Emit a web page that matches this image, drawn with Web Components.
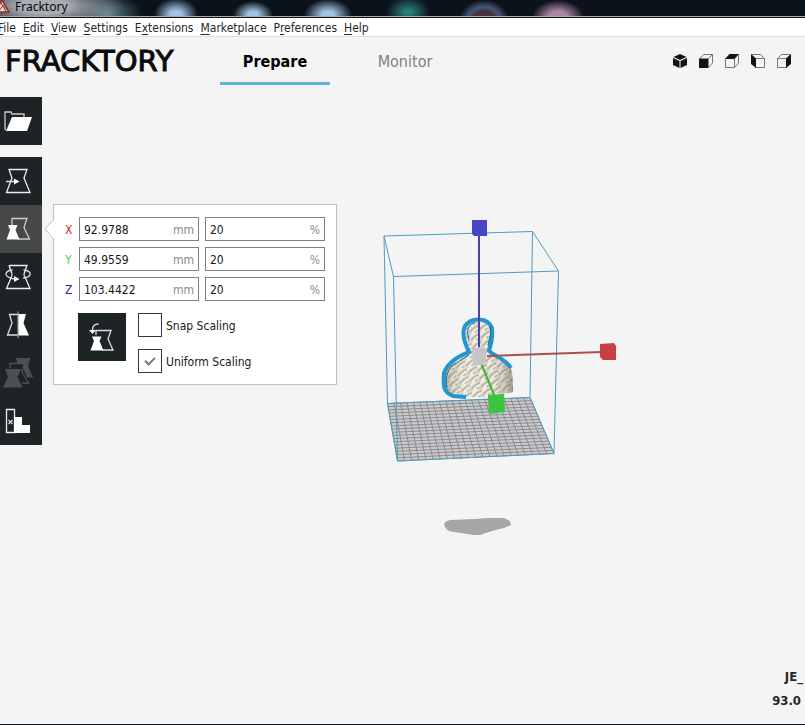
<!DOCTYPE html>
<html lang="en">
<head>
<meta charset="utf-8">
<title>Fracktory</title>
<style>
html, body { margin: 0; }
body { background: #f4f4f4; color: #16191c; font: 12px/18px "DejaVu Sans Condensed", "DejaVu Sans", sans-serif; font-stretch: condensed; overflow: hidden; }
</style>
</head>
<body>
<frack-app></frack-app>
<script>
function define(name, html, setup) {
  const template = document.createElement('template');
  template.innerHTML = html;
  customElements.define(name, class extends HTMLElement {
    connectedCallback() {
      if (this.shadowRoot) return;
      const root = this.attachShadow({ mode: 'open' });
      root.append(template.content.cloneNode(true));
      if (setup) setup(this, root);
    }
  });
}

const glass = 'M9 12.5H27L24 21L30 35.5H6.5L12 21Z';
const toolIcons = {
  open: '<path d="M6 33L5 32V15H11L12 17H24V20" fill="none" stroke="#ccc" stroke-width="1.3"/><path d="M12 20H32L27 34H6Z" fill="#fff"/>',
  move: `<path d="${glass}" fill="none" stroke="#eee" stroke-width="1.3"/><path d="M6 24.5H14" stroke="#ddd" stroke-width="1.5"/><path d="M14 21.5L19.5 24.5L14 27.5Z" fill="#fff"/>`,
  scale: '<path d="M12 20V13.500H27L24 22.500L29.500 34H18" fill="none" stroke="#ccc" stroke-width="1.3"/><path d="M8 20H17.500L15.500 25L19.500 34.500H6.500L10 25Z" fill="#fff"/>',
  rotate: '<path d="M9 12.500H27L24.500 19.500M11.500 19.500L9 12.500M11 25L6.500 35.500H30L25.500 25" fill="none" stroke="#eee" stroke-width="1.3"/><path d="M12.500 17C3 18 4 24.500 15 26M23.500 17C33 18 32 24.500 23 25M11.500 19L12 22L11 25M24.500 19L24 22L25.500 25" fill="none" stroke="#ddd" stroke-width="1.3"/><path d="M14 23L19.500 26L14 29Z" fill="#fff"/>',
  mirror: '<path d="M18 13.500H9.500L12 22L7.500 34H18" fill="none" stroke="#ddd" stroke-width="1.3"/><path d="M18 13H26L23.500 22L29 34.500H18Z" fill="#fff"/><path d="M18 10.500V37" stroke="#999" stroke-width="1.3"/>',
  models: '<g fill="#4d5052"><path d="M16 9H30.500L28 17L33 28.500H27L23 19V14H17Z"/><path d="M5 20H21L17.500 28L22.500 38.500H3L8 28Z"/></g><path d="M10 19V14.500H24.500L22 23L28.500 34H22" fill="none" stroke="#4d5052" stroke-width="1.3"/>',
  blocker: '<path d="M6.500 12.500H14.500V35.500H6.500Z" fill="none" stroke="#eee" stroke-width="1.3"/><path d="M14 20H22V28H30V36H14Z" fill="#fff"/><path d="M8.500 23L12.500 27M12.500 23L8.500 27" stroke="#ddd" stroke-width="1.3"/>'
};

define('window-title', `<style>
:host { display: flex; align-items: center; height: 17px; box-sizing: border-box; border-bottom: 1px solid #a4a8ad; padding-bottom: 2px; color: #08090a;
  background:
   radial-gradient(ellipse 80px 26px at 44px 6px, #a9adb4 30%, transparent),
   radial-gradient(ellipse 34px 20px at 108px 14px, #5f7f8c, transparent),
   radial-gradient(ellipse 22px 17px at 176px 15px, #a0c4e4 25%, transparent),
   radial-gradient(ellipse 20px 14px at 253px 15px, #a0c4e4 25%, transparent),
   radial-gradient(ellipse 24px 16px at 328px 15px, #a0c4e4 25%, transparent),
   radial-gradient(ellipse 22px 16px at 408px 12px, #2d7f7c 10%, transparent),
   radial-gradient(ellipse 25px 20px at 484px 20px, #44333f 45%, #465878 65%, transparent),
   radial-gradient(ellipse 26px 17px at 558px 17px, #a887a4 35%, transparent), #0b121a; }
svg { width: 15px; height: 14px; flex: none; }
.title { font-family: "Noto Sans", sans-serif; font-stretch: normal; line-height: 14px; }
</style>
<svg viewBox="0 0 15 14" aria-hidden="true"><path d="M-5 12L2 0L9 12Z" fill="#e6d9d7" stroke="#8c2822" stroke-width="1.500"/><path d="M-1 11L3 5L6 11M1 3L7 13H-2" fill="none" stroke="#a53c35"/></svg>
<span class="title"><slot></slot></span>`);

define('menu-bar', `<style>
:host { display: block; background: #fff; border-top: 1px solid #11161b; border-bottom: 1px solid #dedede; }
nav { display: flex; gap: 7px; margin-left: -2px; height: 18px; }
a { color: #24272a; text-decoration: none; white-space: nowrap; line-height: 20px; }
u { text-underline-offset: 2px; }
</style><nav><a href="#file"><u>F</u>ile</a><a href="#edit"><u>E</u>dit</a><a href="#view"><u>V</u>iew</a><a href="#settings"><u>S</u>ettings</a><a href="#extensions">E<u>x</u>tensions</a><a href="#marketplace"><u>M</u>arketplace</a><a href="#preferences">P<u>r</u>eferences</a><a href="#help"><u>H</u>elp</a></nav>`);

define('view-buttons', `<style>
:host { display: flex; gap: 12px; }
button { width: 14px; height: 14px; padding: 0; border: 0; background: none; }
svg { display: block; width: 14px; height: 14px; overflow: visible; }
.line { fill: none; stroke: #777; stroke-width: 1; }
.face { fill: #141414; }
</style>
<button aria-label="3D view"><svg viewBox="0 0 14 14"><path class="face" d="M7 0L13.500 3L7 6L.5 3ZM0 4L6.500 7V14L0 11ZM14 4L7.500 7V14L14 11Z"/></svg></button>
<button aria-label="Front view"><svg viewBox="0 0 14 14"><path class="line" d="M.5 4.500L5 .5H13.500V9L9.500 13.500M9.500 4.500L13.500 .5"/><path class="face" d="M0 4.500H9.500V14H0Z"/></svg></button>
<button aria-label="Top view"><svg viewBox="0 0 14 14"><path class="line" d="M.5 4.500V13.500H9.500V4.500M13.500 .5V9L9.500 13.500"/><path class="face" d="M0 5L4.500 0H14L9.500 5Z"/></svg></button>
<button aria-label="Left view"><svg viewBox="0 0 14 14"><path class="line" d="M.5 .5H9.500L13.500 4.500V13.500H4.500V4.500H13.500"/><path class="face" d="M0 0L5 4.500V14L0 10Z"/></svg></button>
<button aria-label="Right view"><svg viewBox="0 0 14 14"><path class="line" d="M9.500 13.500H.5V4.500H9.500M.5 4.500L4.500 .5H13.500"/><path class="face" d="M14 0L9 4.500V14L14 10Z"/></svg></button>`);

define('stage-header', `<style>
:host { display: flex; align-items: flex-start; padding: 0 14px 0 5px; }
.logo { width: 215px; font: 29px/48px "DejaVu Sans", sans-serif; font-stretch: normal; color: #0b0b0b; -webkit-text-stroke: 1px #0b0b0b; }
nav { display: flex; gap: 20px; flex: 1; }
a { width: 110px; height: 48px; box-sizing: border-box; border-bottom: 3px solid transparent; text-align: center; text-decoration: none; font-size: 16px; line-height: 49px; color: #808080; }
a.on { color: #000; font-weight: bold; border-color: #5eb3d9; }
view-buttons { margin-top: 17px; }
</style><div class="logo">FRACKTORY</div>
<nav><a class="on" href="#prepare">Prepare</a><a href="#monitor">Monitor</a></nav><view-buttons></view-buttons>`);

define('tool-button', `<style>
:host { display: block; }
button { display: block; width: 100%; padding: 0; border: 0; background: #1e2326; }
:host([active]) button { background: #464849; }
svg { display: block; width: 42px; height: 48px; }
</style><button><svg viewBox="0 0 42 48"></svg></button>`, (el, root) => {
  root.querySelector('svg').innerHTML = toolIcons[el.getAttribute('icon')];
  const button = root.querySelector('button');
  button.setAttribute('aria-label', el.getAttribute('label'));
  button.disabled = el.hasAttribute('off');
});

define('tool-bar', `<style>
:host { display: flex; flex-direction: column; gap: 12px; width: 42px; flex: none; }
</style><tool-button icon="open" label="Open file"></tool-button>
<div><tool-button icon="move" label="Move"></tool-button><tool-button icon="scale" label="Scale" active></tool-button><tool-button icon="rotate" label="Rotate"></tool-button><tool-button icon="mirror" label="Mirror"></tool-button><tool-button icon="models" label="Per model settings" off></tool-button><tool-button icon="blocker" label="Support blocker"></tool-button></div>`);

define('unit-field', `<style>
:host { display: block; }
label { display: flex; align-items: center; height: 24px; box-sizing: border-box; border: 1px solid #7c7f83; background: #fff; padding: 1px 4px 0; }
input { flex: 1; min-width: 0; width: 0; border: 0; padding: 0; outline: 0; background: none; font: inherit; line-height: 18px; color: #16191c; }
span { color: #8b8b8b; }
</style><label><input type="text"><span></span></label>`, (el, root) => {
  const input = root.querySelector('input');
  input.value = el.getAttribute('value');
  input.setAttribute('aria-label', el.getAttribute('label'));
  root.querySelector('span').textContent = el.getAttribute('unit');
});

define('check-option', `<style>
:host { display: block; }
label { display: flex; align-items: center; gap: 4px; white-space: nowrap; line-height: 20px; }
input { appearance: none; box-sizing: border-box; margin: 0; width: 24px; height: 24px; border: 1px solid #35383b; background: #fff; display: grid; place-items: center; }
input:checked::after { content: ""; width: 8px; height: 4px; border: solid #7a7a7a; border-width: 0 0 2px 2px; transform: translateY(-1px) rotate(-45deg); }
span { padding-top: 2px; }
</style><label><input type="checkbox"><span><slot></slot></span></label>`, (el, root) => {
  root.querySelector('input').checked = el.hasAttribute('checked');
});

define('scale-panel', `<style>
:host { display: block; position: relative; box-sizing: border-box; width: 284px; flex: none; background: #fff; border: 1px solid #c0c0c0; padding: 12px 11px 11px; }
.arrow { position: absolute; left: -10px; top: 14px; width: 10px; height: 20px; }
.fields { display: grid; grid-template-columns: 8px 1fr 1fr; gap: 6px; align-items: center; }
.axis { line-height: 20px; padding-top: 2px; }
.x { color: #d22c2c; } .y { color: #3cdc3c; } .z { color: #2222b4; }
.options { display: flex; gap: 12px; margin: 12px 0 0 13px; }
button { width: 48px; height: 48px; padding: 0; border: 0; background: #1e2326; }
button svg { display: block; }
.checks { display: flex; flex-direction: column; gap: 12px; }
.checks check-option { height: 24px; }
</style>
<svg class="arrow" viewBox="0 0 10 20"><path d="M10 0L1 10L10 20" fill="#fff" stroke="#c0c0c0"/></svg>
<div class="fields">
<span class="axis x">X</span><unit-field label="X size" value="92.9788" unit="mm"></unit-field><unit-field label="X percent" value="20" unit="%"></unit-field>
<span class="axis y">Y</span><unit-field label="Y size" value="49.9559" unit="mm"></unit-field><unit-field label="Y percent" value="20" unit="%"></unit-field>
<span class="axis z">Z</span><unit-field label="Z size" value="103.4422" unit="mm"></unit-field><unit-field label="Z percent" value="20" unit="%"></unit-field>
</div>
<div class="options"><button aria-label="Reset scale"><svg width="48" height="48" viewBox="0 0 48 48"><path d="M18 22V17.500H33L30 26L35 37H24" fill="none" stroke="#ddd" stroke-width="1.300"/><path d="M14 23.500H23.500L21.500 28L25.500 37.500H12.500L16 28Z" fill="#fff"/><path d="M20.500 11C16 11 14.500 13 14.500 17" fill="none" stroke="#ddd" stroke-width="1.300"/><path d="M11 17H18L14.500 21Z" fill="#fff"/></svg></button>
<div class="checks"><check-option>Snap Scaling</check-option><check-option checked>Uniform Scaling</check-option></div></div>`);

define('model-scene', `<style>
:host { display: block; }
svg { display: block; width: 260px; height: 340px; }
.frame { fill: none; stroke: #4a9fc0; stroke-width: 1; }
.grid { stroke: #8b8c90; stroke-width: 1; }
</style>
<svg viewBox="370 210 260 340" role="img" aria-label="Model on the build plate">
<defs><pattern id="cloth" width="10" height="8" patternUnits="userSpaceOnUse" patternTransform="rotate(-12)"><rect width="10" height="8" fill="#d6d2c2"/><path d="M0 7L4 4L10 2M5 8L8 6" stroke="#989380" fill="none" stroke-width="1.200"/><path d="M0 3L6 0M2 8L9 4" stroke="#f8f5ea" stroke-width="1.600"/></pattern>
<linearGradient id="shade"><stop offset="0" stop-color="#777160" stop-opacity=".35"/><stop offset=".3" stop-color="#fff" stop-opacity=".2"/><stop offset=".65" stop-color="#fff" stop-opacity=".1"/><stop offset="1" stop-color="#665f50" stop-opacity=".5"/></linearGradient>
<path id="bust" d="M469 350C465 342 462 334 465 327Q469 320 479 320Q489 320 492 328Q493 342 489 350C491 354 502 356 510 365C513 374 513 382 513 392L504 394L499 398L466 397L449 395Q442 390 445 373C448 362 460 357 469 352Z"/></defs>
<path d="M387.500 403.500L530 397.500L554 453.500L397.500 461Z" fill="#cbcbce"/>
<g class="grid"></g>
<path class="frame" d="M387.500 403.500L530 397.500L554 453.500L397.500 461ZM384 236L532.500 231.500L558.500 271L393.500 276.500ZM384 236L387.500 403.500M532.500 231.500L530 397.500M558.500 271L554 453.500M393.500 276.500L397.500 461"/>
<use href="#bust" fill="url(#cloth)"/>
<use href="#bust" fill="url(#shade)"/>
<path d="M466 397L453 396C443 392 443 386 444 373C448 361 460 356 469 352C464 342 462 332 465 326Q470 319 479 319.500Q489 320 492 328Q493 340 489 350C490 355 503 356 511 368" fill="none" stroke="#2297cf" stroke-width="4"/>
<path d="M469 340Q464 326 475 322M447 388Q444 374 452 366L469 355M490 326L491 333L488 345" fill="none" stroke="#126b9d"/>
<path d="M479 234V347" stroke="#4c41a3" stroke-width="2"/>
<path d="M487 356L602 352" stroke="#ad4e52" stroke-width="2"/>
<path d="M481 363L495 397" stroke="#43b443" stroke-width="2"/>
<path d="M472 348H486V361L484 365H473Z" fill="#c6c4c8"/>
<path d="M472 220H487V236H474L472 234Z" fill="#4845c4"/>
<path d="M600 344L614 343L616 346V360H603L600 357Z" fill="#c74144"/>
<path d="M488 395L504 394L505 412L489 414Z" fill="#3cc43e"/>
<path d="M444 524Q445 521 450 520L475 519L488 518H504L510 521L511 525L504 528L492 531L480 535H474L454 532Q445 531 444 524Z" fill="#a6a6a6"/>
</svg>`, (el, root) => {
  const tl = [387.5, 403.5], tr = [530, 397.5], br = [554, 453.5], bl = [397.5, 461];
  const at = (a, b, t) => (a[0] + (b[0] - a[0]) * t).toFixed(1) + ' ' + (a[1] + (b[1] - a[1]) * t).toFixed(1);
  let d = '';
  for (let i = 0; i <= 22; i++) d += `M${at(tl, tr, i / 22)}L${at(bl, br, i / 22)}`;
  for (let i = 0; i <= 18; i++) d += `M${at(tl, bl, i / 18)}L${at(tr, br, i / 18)}`;
  root.querySelector('.grid').innerHTML = `<path d="${d}"/>`;
});

define('model-info', `<style>
:host { display: flex; flex-direction: column; align-items: flex-end; gap: 6px; font-weight: bold; font-size: 13px; color: #24282c; padding-bottom: 14px; border-bottom: 1px solid #16191c; }
.name { padding-right: 2px; }
.size { padding-right: 4px; }
</style><span class="name">JE_</span><span class="size">93.0</span>`);

define('frack-app', `<style>
:host { display: flex; flex-direction: column; min-height: 100vh; }
main { display: flex; align-items: flex-start; flex: 1; padding-top: 12px; }
scale-panel { margin: 107px 0 0 11px; }
model-scene { margin: 113px 0 0 33px; }
</style><window-title>Fracktory</window-title><menu-bar></menu-bar><stage-header></stage-header>
<main><tool-bar></tool-bar><scale-panel></scale-panel><model-scene></model-scene></main><model-info></model-info>`);
</script>
</body>
</html>
